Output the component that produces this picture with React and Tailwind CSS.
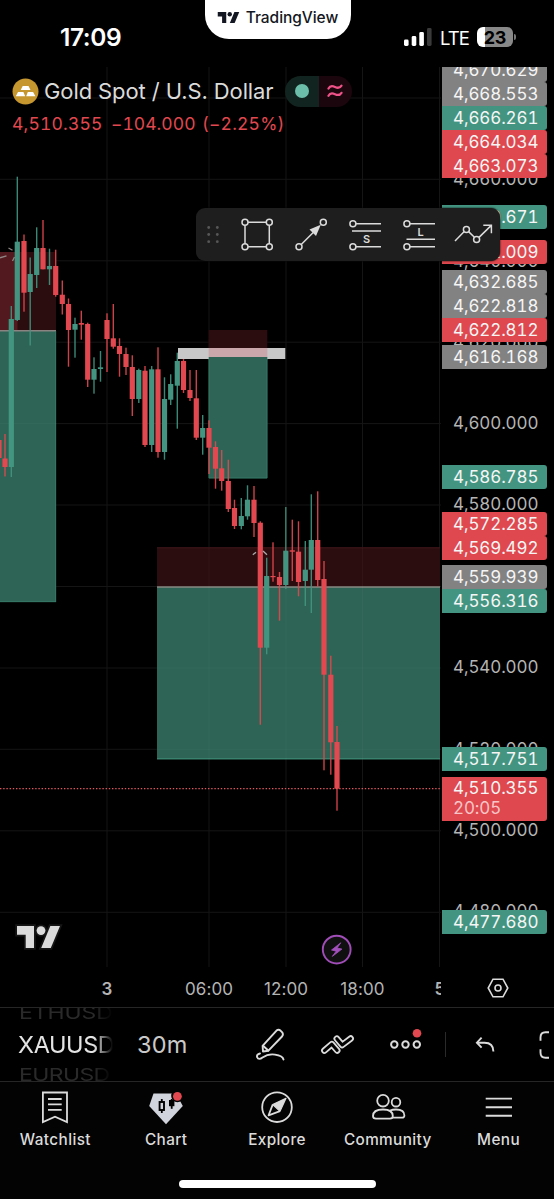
// [x, high, low, bodyTop, bodyBottom, rising]
const candles = [
    [-1, 412, 458, 440, 458, 0],
    [5, 434, 476.5, 458.5, 467, 0],
    [11.3, 306, 477, 319, 467, 1],
    [17.3, 176.7, 321, 241.7, 320, 1],
    [24, 234.5, 311.7, 241, 292.7, 0],
    [30.2, 257.5, 345.5, 274, 292, 1],
    [36.7, 227.3, 288, 248, 275, 1],
    [43, 220, 269.3, 248, 269.3, 0],
    [49.5, 248.7, 285, 266, 269.3, 1],
    [55.7, 249.7, 296.7, 266, 295, 0],
    [62.3, 280.5, 314.5, 294.7, 304, 0],
    [68.5, 298.5, 366.7, 304, 330, 0],
    [75, 317.7, 357.7, 324, 329.7, 1],
    [81.3, 310.7, 339.7, 323, 324.7, 0],
    [87.7, 322.7, 387, 324, 379.7, 0],
    [94, 357.3, 393.7, 369, 379.7, 1],
    [100.5, 351, 381.7, 367.3, 369, 1],
    [107, 313.3, 372, 320, 339, 0],
    [113.3, 304, 348.7, 338.3, 346.7, 0],
    [119.5, 338.3, 376.7, 346, 354, 0],
    [126, 347.7, 375, 354, 367, 0],
    [132.3, 355.3, 416, 367, 399, 0],
    [138.8, 368.7, 403, 370, 399, 1],
    [145, 366, 447, 370.7, 445, 0],
    [151.7, 366, 452, 369.3, 445, 1],
    [158, 347.3, 457.7, 369.3, 452, 0],
    [164.5, 377.3, 459.7, 399, 452, 1],
    [170.7, 374.3, 405, 384, 399.7, 1],
    [177.3, 352.7, 428.7, 361, 385.7, 1],
    [183.5, 358.7, 393, 361, 390, 0],
    [190, 370, 401, 390, 398, 0],
    [196.3, 370, 440, 398.3, 437.7, 0],
    [202.7, 415, 454.7, 428, 437.7, 1],
    [209, 420.3, 474, 428, 447.7, 0],
    [215.5, 441.3, 488.7, 447, 468.7, 0],
    [221.7, 450, 490.7, 468.3, 481, 0],
    [228.3, 459.7, 512, 481, 509, 0],
    [234.5, 499.7, 529, 508, 526, 0],
    [241.3, 498, 529.3, 516, 526, 1],
    [247.5, 485.3, 519.7, 499.7, 516.3, 1],
    [254, 486, 537, 499.7, 523, 0],
    [260.3, 521.3, 724.7, 522.7, 647.7, 0],
    [266.7, 557.7, 654.3, 576, 647.7, 1],
    [273, 542.3, 581.7, 576, 577.2, 0],
    [279.5, 572, 620.7, 577, 585, 0],
    [285.8, 507, 589, 550.7, 585, 1],
    [292.3, 519.7, 581, 550.3, 551.7, 0],
    [298.5, 521.3, 596.3, 551.7, 582, 0],
    [305.3, 541, 606, 569.7, 581, 1],
    [311.3, 494.3, 613, 540, 569.7, 1],
    [317.7, 491.3, 586.7, 540, 580, 0],
    [324, 561, 770.3, 579, 674.7, 0],
    [330.8, 655.7, 774.7, 674.7, 742.3, 0],
    [337, 726, 810.7, 742, 788.7, 0],
];

const gridX = [107, 209, 286, 362.5, 439.5];
const gridY = [98, 179.3, 260.8, 342.2, 423.6, 505, 586.5, 668, 749.3, 830.8, 912.3];

// y is the middle of the text on the scale
const ticks = [
    { y: 112, text: "4,660.000" },
    { y: 194, text: "4,640.000" },
    { y: 275, text: "4,620.000" },
    { y: 356, text: "4,600.000" },
    { y: 437.4, text: "4,580.000" },
    { y: 600.4, text: "4,540.000" },
    { y: 682, text: "4,520.000" },
    { y: 763.4, text: "4,500.000" },
    { y: 844.4, text: "4,480.000" },
];

const GRAY = "bg-[#828282]";
const GREEN = "bg-[#439581]";
const RED = "bg-[#de484e]";

const labels = [
    { y: 3, text: "4,670.629", bg: GRAY },
    { y: 27, text: "4,668.553", bg: GRAY },
    { y: 51, text: "4,666.261", bg: GREEN },
    { y: 75, text: "4,664.034", bg: RED },
    { y: 99.3, text: "4,663.073", bg: RED },
    { y: 150.3, text: "4,650.671", bg: GREEN },
    { y: 185.3, text: "4,642.009", bg: RED },
    { y: 215.3, text: "4,632.685", bg: GRAY },
    { y: 239.3, text: "4,622.818", bg: GRAY },
    { y: 263.3, text: "4,622.812", bg: RED },
    { y: 290.4, text: "4,616.168", bg: GRAY },
    { y: 410.4, text: "4,586.785", bg: GREEN },
    { y: 457, text: "4,572.285", bg: RED },
    { y: 481, text: "4,569.492", bg: RED },
    { y: 510.4, text: "4,559.939", bg: GRAY },
    { y: 534.4, text: "4,556.316", bg: GREEN },
    { y: 691.6, text: "4,517.751", bg: GREEN },
    { y: 854.6, text: "4,477.680", bg: GREEN },
];

function Logo({ className }) {
    return (
        <svg className={className} viewBox="0 0 43 22" fill="currentColor">
            <path d="M0 0h17v22H8.7V8.8H0z" />
            <circle cx="24" cy="4.6" r="4.4" />
            <path d="M33.3 0H43l-9.2 22h-9.6z" />
        </svg>
    );
}

function StatusBar() {
    return (
        <div className="relative flex h-[67px] shrink-0 items-start justify-between pl-[60px] pr-[38px]">
            <div className="mt-[20px] text-[24.5px] leading-[34px] font-semibold tracking-[-0.4px] text-white">17:09</div>

            <div className="absolute left-[204.5px] top-0 flex h-[38.5px] w-[146px] items-center justify-center gap-[6px] rounded-b-[24px] bg-white pb-[3px] text-[#131722]">
                <Logo className="h-[11px] w-[23px]" />
                <span className="text-[15.5px] font-medium tracking-[-0.05px]">TradingView</span>
            </div>

            <div className="mt-[27px] flex h-5 items-center">
                <svg className="mr-[8px] h-[18px] w-[28px]" viewBox="0 0 28 18">
                    <rect x="0" y="11.5" width="4.6" height="6.5" rx="1.4" fill="#fff" />
                    <rect x="7.7" y="8" width="4.6" height="10" rx="1.4" fill="#fff" />
                    <rect x="15.3" y="4" width="4.6" height="14" rx="1.4" fill="#fff" />
                    <rect x="23" y="0" width="4.6" height="18" rx="1.4" fill="#3a3a3a" />
                </svg>
                <span className="mr-[8px] pt-px text-[18.5px] leading-5 tracking-[-0.9px] text-white">LTE</span>
                <div className="flex h-5 w-9 items-center justify-center rounded-[6px] bg-linear-to-r from-white from-22% to-[#888] to-22% text-[18px] font-bold tracking-[-0.3px] text-black">
                    23
                </div>
                <div className="ml-px h-[6px] w-[2px] rounded-r bg-[#777]"></div>
            </div>
        </div>
    );
}

function SymbolHeader() {
    return (
        <div className="absolute left-0 top-0 pt-[8px] pl-[12px]">
            <div className="flex h-8 items-center">
                <svg className="h-[27px] w-[27px]" viewBox="0 0 27 27">
                    <circle cx="13.5" cy="13.5" r="13" fill="#c6962f" />
                    <path d="M10.7 8h5.8l2 4h-9.8zM6 14h5.4l1.8 4.2H3.8zM15.8 14h5.3l2.3 4.2h-9.2z" fill="#fff" />
                </svg>
                <span className="ml-[5px] w-[229px] whitespace-nowrap text-[22px] font-normal tracking-[-0.1px] text-[#dbdbdb]">
                    Gold Spot / U.S. Dollar
                </span>
                <div className="ml-[12px] flex h-[31px] overflow-hidden rounded-full">
                    <div className="flex w-[34px] items-center justify-center bg-[#12241f]">
                        <span className="h-[14px] w-[14px] rounded-full bg-[#6bbeaa]"></span>
                    </div>
                    <div className="flex w-[33px] items-center justify-center bg-[#1b060d] pr-px">
                        <svg className="h-4 w-4" viewBox="0 0 16 16" fill="none" stroke="#ef5288" strokeWidth="2.2" strokeLinecap="round">
                            <path d="M1.5 5.6C2.8 3 5 2.6 8 4s5 1 6.5-1.4" />
                            <path d="M1.5 12.8C2.8 10.2 5 9.8 8 11.2s5 1 6.5-1.4" />
                        </svg>
                    </div>
                </div>
            </div>
            <div className="mt-[4px] flex h-[26px] items-center whitespace-nowrap text-[17.5px] font-normal tabular-nums text-[#e2484f]">
                <span className="w-[99px] tracking-[0.2px]">4,510.355</span>
                <span className="w-[91px] tracking-[0.05px]">−104.000</span>
                <span className="tracking-[0.2px]">(−2.25%)</span>
            </div>
        </div>
    );
}

function Chart() {
    return (
        <svg className="h-[900px] w-[441px] shrink-0" viewBox="0 67 441 900">
            <g stroke="#151515" strokeWidth="1">
                {gridX.map((x) => (
                    <line key={x} x1={x} x2={x} y1="67" y2="967" />
                ))}
                {gridY.map((y) => (
                    <line key={y} x1="0" x2="441" y1={y} y2={y} />
                ))}
            </g>

            {/* left position */}
            <rect x="0" y="252" width="56" height="78" fill="#2b0d0f" />
            <rect x="0" y="252" width="17.5" height="78" fill="#521a1e" />
            <rect x="0" y="331" width="56" height="271" fill="#2d6455" />
            <path d="M0 330.7H56" stroke="#8b8282" strokeWidth="1.4" />
            <path d="M55.7 331V602M0 601.7H56" stroke="#377d6b" strokeWidth="0.8" />
            <path d="M0 257.8l6.5-2M8.5 248l4 2.3M12.5 261l2-4" stroke="#8f8585" strokeWidth="1.3" />

            {/* wide position */}
            <rect x="157" y="547.5" width="283" height="39" fill="#2b0d0f" />
            <path d="M157 547.8H440" stroke="#42181b" strokeWidth="1" />
            <rect x="157" y="587" width="283" height="172.3" fill="#2d6455" />
            <path d="M157 587H440" stroke="#8a8a84" strokeWidth="1.7" />
            <path d="M157 758.8H440" stroke="#3f8c78" strokeWidth="1" />

            <rect x="208.7" y="330" width="58.6" height="27" fill="#2b0d0f" />
            <rect x="208.7" y="357" width="58.6" height="121.3" fill="#2d6455" />
            <path d="M209 357V478H267V357" fill="none" stroke="#377d6b" strokeWidth="0.8" />

            {/* grid shows through the zones */}
            <g stroke="#ffffff" strokeOpacity="0.03">
                {[668, 749.3].map((y) => (
                    <line key={y} x1="157" x2="440" y1={y} y2={y} />
                ))}
                {[209, 286, 362.5].map((x) => (
                    <line key={x} x1={x} x2={x} y1="548" y2="759" />
                ))}
                <line x1="0" x2="56" y1="423.6" y2="423.6" />
            </g>

            {candles.map(([x, high, low, top, bottom, rising]) => (
                <g key={x} fill={rising ? "#439581" : "#e2484f"}>
                    <rect x={x - 0.7} y={high} width="1.4" height={low - high} opacity="0.9" />
                    <rect x={x - 2.6} y={top} width="5.2" height={bottom - top} />
                </g>
            ))}

            <path d="M252.8 554.8l3.2-2.6M263 551l4 3.8" stroke="#aaa" strokeWidth="1.3" />

            <rect x="178" y="348" width="107.3" height="11" fill="#c8c8c8" />
            <rect x="208.7" y="348" width="58.6" height="9" fill="#caa7aa" />
            <rect x="208.7" y="357" width="58.6" height="3" fill="#2d6455" />

            <line x1="0" x2="441" y1="788.6" y2="788.6" stroke="#e0565d" strokeWidth="1.4" strokeDasharray="1.4 1.8" />

            <g>
                <circle cx="336.7" cy="949.6" r="13.9" fill="#101010" stroke="#a04db8" strokeWidth="1.9" />
                <path d="M340.8 942.8l-9.3 7.2 4.7 1.2-3.9 5.2 9.6-7.3-4.8-1.2z" fill="#a350bd" stroke="#a350bd" strokeWidth="0.8" strokeLinejoin="round" />
            </g>

            <g transform="translate(17 926)" fill="#dbdbdb" stroke="#161616" strokeWidth="3.5" paintOrder="stroke">
                <path d="M0 0h17v22H8.7V8.8H0z" />
                <path d="M33.3 0H43l-9.2 22h-9.6z" />
                <circle cx="24" cy="4.6" r="4.4" />
            </g>
        </svg>
    );
}

function PriceScale() {
    return (
        <div className="relative h-[900px] w-[113px] shrink-0 overflow-hidden text-[17px] font-normal tabular-nums tracking-[-0.1px]">
            {ticks.map((t) => (
                <div key={t.text} className="absolute left-[12px] h-6 leading-6 text-[#b4b4b4]" style={{ top: t.y - 12 }}>
                    {t.text}
                </div>
            ))}
            {labels.map((l) => (
                <div
                    key={l.text}
                    className={`absolute left-[1px] h-[24px] w-[105px] rounded-r-[3px] pl-[11px] leading-[24px] text-[#f5f5f5] ${l.bg}`}
                    style={{ top: l.y - 12 }}
                >
                    {l.text}
                </div>
            ))}
            <div className="absolute left-[1px] top-[710px] h-[44px] w-[105px] rounded-r-[3px] bg-[#de484e] pt-px pl-[11px] leading-[20px] text-[#f5f5f5]">
                <div>4,510.355</div>
                <div className="text-[#f8c5c7]">20:05</div>
            </div>
        </div>
    );
}

function DrawingToolbar() {
    return (
        <div className="absolute left-[196px] top-[141px] flex h-[53px] w-[304px] rounded-[9px] bg-[#1e1e1e] shadow-[0_0_2px_#000]">
            <svg className="h-[54px] w-[34px]" viewBox="0 0 34 54" fill="#575757">
                {[19.5, 26.5, 33.7].map((y) => (
                    <g key={y}>
                        <circle cx="12.7" cy={y} r="1.4" />
                        <circle cx="21.3" cy={y} r="1.4" />
                    </g>
                ))}
            </svg>
            <svg className="h-[54px] w-[54px]" viewBox="0 0 54 54" fill="none" stroke="#dbdbdb" strokeWidth="1.5">
                <path d="M18 14.3H36M18 38.7H36M15 17.5V35.5M39.3 17.5V35.5" />
                <circle cx="15" cy="14.3" r="3" />
                <circle cx="39.3" cy="14.3" r="3" />
                <circle cx="15" cy="38.7" r="3" />
                <circle cx="39.3" cy="38.7" r="3" />
            </svg>
            <svg className="h-[54px] w-[54px]" viewBox="0 0 54 54" fill="none" stroke="#dbdbdb" strokeWidth="1.5">
                <path d="M17.2 36.5L30 23.7" />
                <path d="M25.5 21.5L36.8 16.7L32 28z" fill="#dbdbdb" stroke="none" />
                <circle cx="15" cy="38.7" r="3" />
                <circle cx="39.3" cy="14.3" r="3" />
            </svg>
            <svg className="h-[54px] w-[54px]" viewBox="0 0 54 54" fill="none" stroke="#dbdbdb" strokeWidth="1.5">
                <path d="M18 15.7H43M14 23H43M18 38.7H43" />
                <circle cx="14.9" cy="15.7" r="3" />
                <circle cx="14.9" cy="38.7" r="3" />
                <text x="28.5" y="35" textAnchor="middle" fontSize="11" fontWeight="600" fill="#dbdbdb" stroke="none">S</text>
            </svg>
            <svg className="h-[54px] w-[54px]" viewBox="0 0 54 54" fill="none" stroke="#dbdbdb" strokeWidth="1.5">
                <path d="M18 15.7H43M14.5 31.3H43M18 38.7H43" />
                <circle cx="14.9" cy="15.7" r="3" />
                <circle cx="14.9" cy="38.7" r="3" />
                <text x="28.5" y="27.7" textAnchor="middle" fontSize="11" fontWeight="600" fill="#dbdbdb" stroke="none">L</text>
            </svg>
            <svg className="h-[54px] w-[54px]" viewBox="0 0 54 54" fill="none" stroke="#dbdbdb" strokeWidth="1.5">
                <path d="M9 33L18 23.8M22.6 23.6L28.4 29.2M33 29.4L45.3 17.4M37.3 17.3H45.4V25.3" />
                <circle cx="20.4" cy="21.5" r="3" />
                <circle cx="30.6" cy="31.4" r="3" />
            </svg>
        </div>
    );
}

function TimeAxis() {
    return (
        <div className="flex h-[40px] shrink-0 text-[17px] leading-[44px] font-normal tracking-[0.1px] text-[#b4b4b4]">
            <div className="flex w-[441px] overflow-hidden pl-[56px] text-center">
                <span className="w-[102px] shrink-0 font-semibold">3</span>
                <span className="w-[102px] shrink-0">06:00</span>
                <span className="w-[52px] shrink-0">12:00</span>
                <span className="w-[101px] shrink-0">18:00</span>
                <span className="w-[54px] shrink-0 font-semibold">5</span>
            </div>
            <div className="flex w-[113px] items-center justify-center pt-[2px]">
                <svg className="h-[20px] w-[22px]" viewBox="0 0 22 20" fill="none" stroke="#dbdbdb" strokeWidth="1.6">
                    <path d="M6 1.2H16L20.8 10L16 18.8H6L1.2 10z" />
                    <circle cx="11" cy="10" r="3" />
                </svg>
            </div>
        </div>
    );
}

function BottomToolbar() {
    return (
        <div className="flex h-[75px] shrink-0 items-center overflow-hidden border-y border-[#262626]">
            <div className="ml-[18px] flex h-[73px] w-[95px] shrink-0 flex-col items-start justify-center overflow-hidden mask-r-from-80% mask-r-to-100% text-[23.5px] leading-[31px]">
                <span className="scale-y-75 pl-px text-[23px] tracking-[-0.1px] text-[#2a2a2a]">ETHUSD</span>
                <span className="tracking-[-0.4px] text-[#e4e4e4]">XAUUSD</span>
                <span className="scale-y-75 pl-px text-[23px] tracking-[-0.6px] text-[#2a2a2a]">EURUSD</span>
            </div>
            <span className="ml-[24px] w-[119px] text-[23.5px] tracking-[0.2px] text-[#c9c9c9]">30m</span>

            <svg className="h-[34px] w-[30px] shrink-0" viewBox="0 0 30 34" fill="none" stroke="#dbdbdb" strokeWidth="1.9" strokeLinecap="round" strokeLinejoin="round">
                <path d="M7 23.5L6.6 17.8L20.5 2.6Q22.6 1 24.7 2.8L26 4.2Q27.8 6.3 26 8.5L12.4 22.7z" />
                <path d="M7 17.8L12.3 22.5" />
                <path d="M4 25.5C1.5 26 .5 27.5 1.2 29.3C2 31.6 4.5 31.2 6.5 29.6C11 26.4 15 26 19 26.6C24 27.3 27 29 27.5 31.5" />
            </svg>

            <svg className="ml-[34px] h-[22px] w-[35px] shrink-0" viewBox="0 0 35 22" fill="none" strokeLinecap="round" strokeLinejoin="round">
                <g stroke="#dbdbdb" strokeWidth="6.6">
                    <path d="M4.4 16.6L11.8 10.2L17.2 16.4" />
                    <path d="M16.8 4.7L22.2 11L30.6 4.6" />
                </g>
                <g stroke="#000" strokeWidth="3">
                    <path d="M4.4 16.6L11.8 10.2L17.2 16.4" />
                    <path d="M16.8 4.7L22.2 11L30.6 4.6" />
                </g>
            </svg>

            <svg className="ml-[33px] h-[34px] w-[36px] shrink-0" viewBox="0 0 36 34" fill="none" stroke="#dbdbdb" strokeWidth="2">
                <circle cx="6.3" cy="16.5" r="3.2" />
                <circle cx="17.5" cy="16.5" r="3.2" />
                <circle cx="28.8" cy="16.5" r="3.2" />
                <circle cx="29" cy="5.3" r="4.3" fill="#e2484f" stroke="none" />
            </svg>

            <div className="ml-[21px] h-[25px] w-px shrink-0 bg-[#2a2a2a]"></div>

            <svg className="ml-[29px] h-[18px] w-[20px] shrink-0" viewBox="0 0 20 18" fill="none" stroke="#dbdbdb" strokeWidth="1.9">
                <path d="M6.6 1.7L1.9 6.7L6.6 11.7" />
                <path d="M2 6.7H9.5C15 6.7 18.4 9.8 18.4 15.5" />
            </svg>

            <svg className="ml-[44px] h-[28px] w-[12px] shrink-0" viewBox="0 0 12 28" fill="none" stroke="#dbdbdb" strokeWidth="1.9">
                <path d="M1.5 9.7V6.5Q1.5 1.2 6.5 1.2H10" />
                <path d="M1.5 18.3V21.5Q1.5 26.8 6.5 26.8H10" />
            </svg>
        </div>
    );
}

const tabs = [
    {
        name: "Watchlist",
        icon: (
            <path d="M5.9 2.5H30V32L18 26.7L5.9 32zM11 9H24.7M11 14.4H24.7M11 19.8H24.7" fill="none" stroke="#dbdbdb" strokeWidth="1.8" />
        ),
    },
    {
        name: "Chart",
        icon: (
            <>
                <path d="M5.5 3.4H28L34.8 16L18 34.3L1.2 16z" fill="#d1d4dc" />
                <path d="M13.8 9V23" stroke="#000" strokeWidth="1.8" />
                <rect x="11.6" y="12" width="4.4" height="8" fill="#d1d4dc" stroke="#000" strokeWidth="1.9" />
                <path d="M23.7 9V18.8" stroke="#000" strokeWidth="1.8" />
                <rect x="21" y="10" width="5.4" height="6.2" fill="#000" />
                <circle cx="29.4" cy="6" r="6.2" fill="#030303" />
                <circle cx="29.4" cy="6.3" r="4.4" fill="#e2484f" />
            </>
        ),
    },
    {
        name: "Explore",
        icon: (
            <g stroke="#dbdbdb" strokeWidth="1.8" fill="none" strokeLinejoin="round">
                <circle cx="18" cy="17.2" r="14.8" />
                <path d="M27 8.2L13.7 14.6L21 21.2z" fill="#dbdbdb" strokeWidth="1.2" />
                <path d="M13.7 14.6L9.6 25.3L21 21.2" />
            </g>
        ),
    },
    {
        name: "Community",
        icon: (
            <g stroke="#dbdbdb" strokeWidth="1.8" fill="none">
                <circle cx="13" cy="10.7" r="5.8" />
                <circle cx="26" cy="12.2" r="4.3" />
                <path d="M6 28.7Q3 28.7 3 26Q3 19.5 13 19.5Q22.8 19.5 22.8 26Q22.8 28.7 20 28.7z" />
                <path d="M20 20.5Q22.5 19.5 26 19.5Q34.4 19.5 34.4 25.5Q34.4 27.7 32 27.7H22.5" />
            </g>
        ),
    },
    {
        name: "Menu",
        icon: <path d="M4.7 8.6H31M4.7 17.2H31M4.7 25.8H31" stroke="#dbdbdb" strokeWidth="1.9" />,
    },
];

function TabBar() {
    return (
        <div className="flex flex-1 flex-col items-center bg-[#030303]">
            <div className="grid w-full grid-cols-5 pt-[8px]">
                {tabs.map((tab) => (
                    <div key={tab.name} className="flex flex-col items-center">
                        <svg className="h-9 w-9" viewBox="0 0 36 36">{tab.icon}</svg>
                        <span className="mt-[4px] text-[15.3px] leading-[20px] font-medium tracking-[0.4px] text-[#dbdbdb]">
                            {tab.name}
                        </span>
                    </div>
                ))}
            </div>
            <div className="mt-[30px] h-2 w-[197px] rounded-full bg-white"></div>
        </div>
    );
}

export default function App() {
    return (
        <div className="flex h-[1199px] w-[554px] flex-col overflow-hidden bg-black font-['Inter','Liberation_Sans',sans-serif]">
            <StatusBar />
            <div className="relative flex h-[900px] shrink-0">
                <Chart />
                <PriceScale />
                <SymbolHeader />
                <DrawingToolbar />
            </div>
            <TimeAxis />
            <BottomToolbar />
            <TabBar />
        </div>
    );
}
